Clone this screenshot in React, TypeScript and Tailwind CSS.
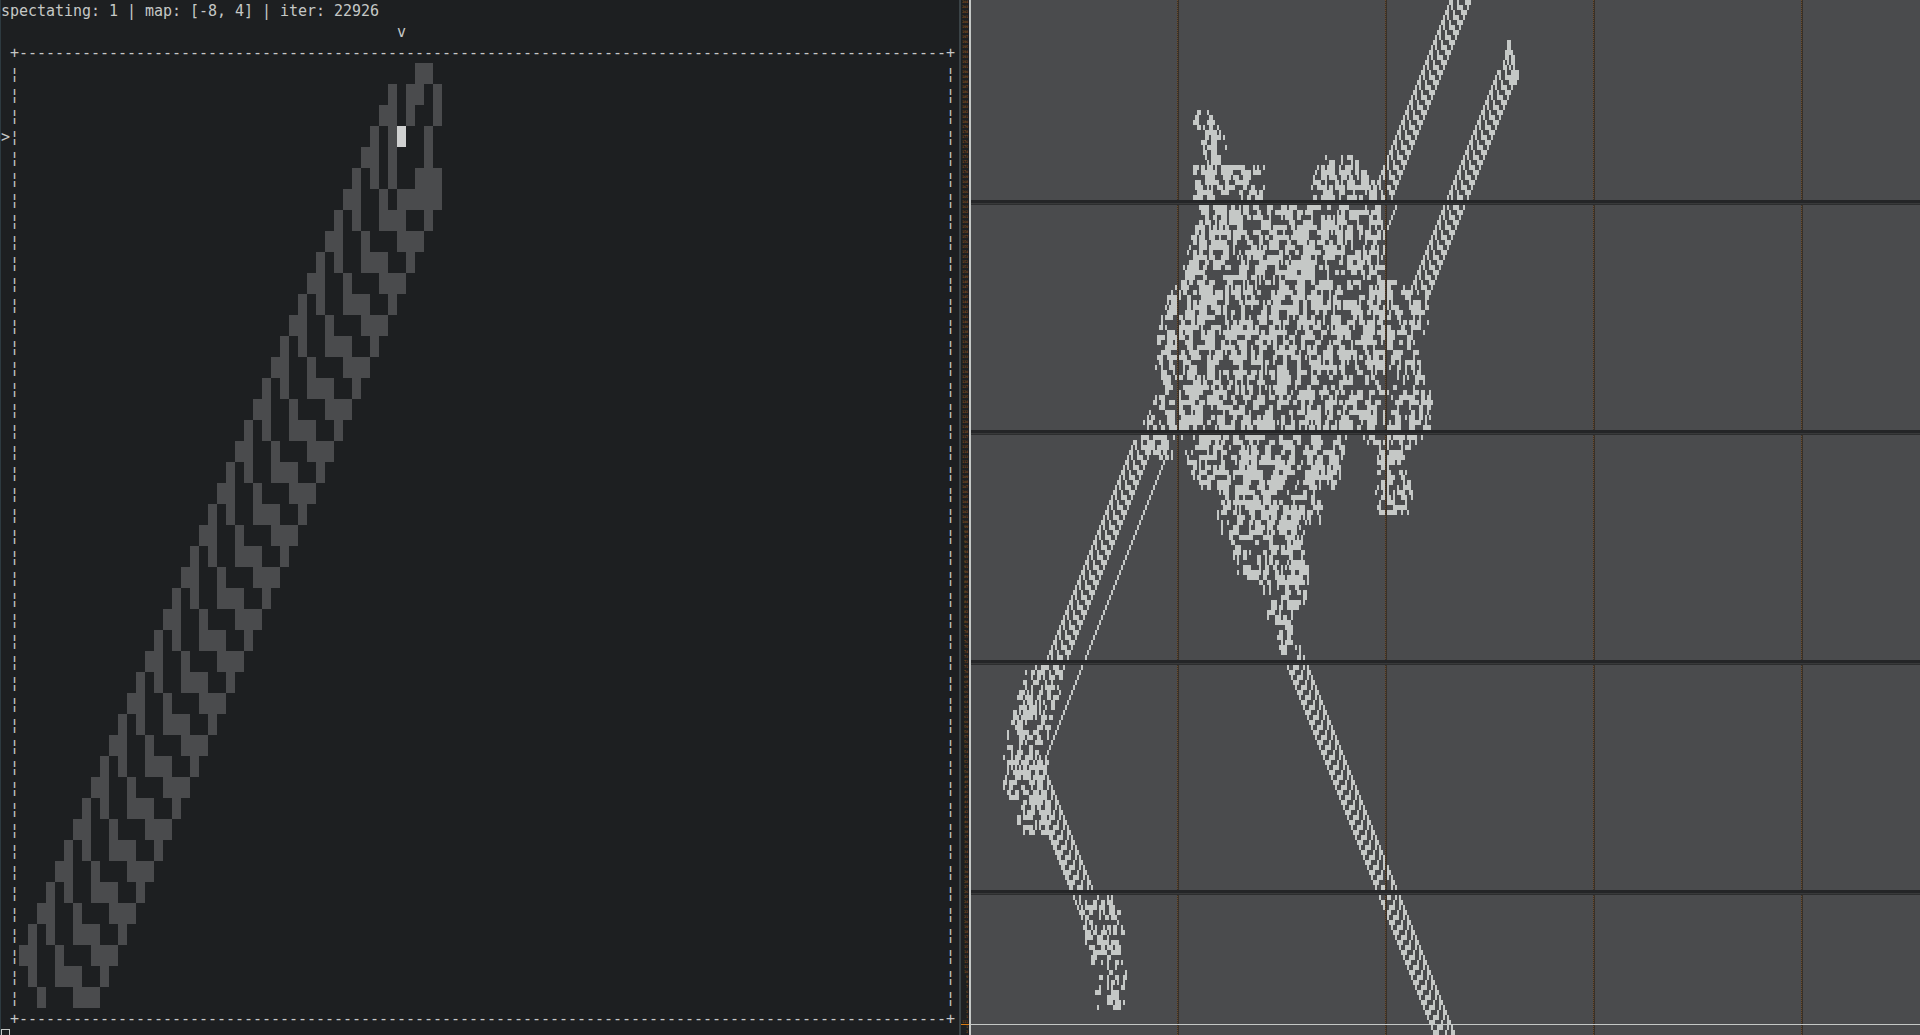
const BG = '#1d1f21'
const DEAD = '#4a4b4d'
const LIVE = '#c5c8c6'

// ---- left pane ----

const LEFT_HEAD: number[][] = [
    [46, 47],
    [43, 45, 46, 48],
    [42, 43, 45, 48],
    [41, 43, 47],
    [40, 41, 43, 47],
    [39, 41, 43, 46, 47, 48],
    [38, 39, 42, 44, 45, 46, 47, 48],
]

// the glider repeats every two rows, one column further left each row
function downLeft(r: number, base: number) {
    const even = r % 2 === 0
    const b = even ? base - r : base - (r - 1)
    return even
        ? [b, b + 1, b + 4, b + 8, b + 9, b + 10]
        : [b - 1, b + 1, b + 4, b + 5, b + 6, b + 9]
}

function downRight(r: number, base: number) {
    const even = r % 2 === 0
    const t = even ? r + base : r - 1 + base
    return even
        ? [t, t - 1, t - 4, t - 8, t - 9, t - 10]
        : [t + 1, t - 1, t - 4, t - 5, t - 6, t - 9]
}

function leftRow(r: number) {
    if (r < LEFT_HEAD.length) return LEFT_HEAD[r]
    if (r === 43) return [3, 6, 7, 8, 11]
    if (r === 44) return [4, 8, 9, 10]
    return downLeft(r, 44)
}

function cellsPath(rows: number[][], w: number, h: number, x0 = 0, y0 = 0) {
    let d = ''
    rows.forEach((cols, r) => {
        const sorted = [...new Set(cols)].sort((a, b) => a - b)
        let i = 0
        while (i < sorted.length) {
            let j = i
            while (j + 1 < sorted.length && sorted[j + 1] === sorted[j] + 1) j++
            const run = (sorted[j] - sorted[i] + 1) * w
            d += `M${x0 + sorted[i] * w} ${y0 + r * h}h${run}v${h}h${-run}z`
            i = j + 1
        }
    })
    return d
}

const leftCells = cellsPath(Array.from({ length: 45 }, (_, r) => leftRow(r)), 9, 21)

function boardLine(r: number) {
    const head = r === 3 ? '>' : ' '
    return head + '¦' + ' '.repeat(103) + '¦'
}

function LeftPane() {
    return (
        <div className="relative w-[958px] shrink-0 overflow-hidden whitespace-pre pt-[1px] text-[15px] leading-[21px] tracking-[-0.03px] text-[#c5c8c6]">
            <div>spectating: 1 | map: [-8, 4] | iter: 22926</div>
            <div>{' '.repeat(44) + 'v'}</div>
            <div>{' +' + '-'.repeat(103) + '+'}</div>
            {Array.from({ length: 45 }, (_, r) => (
                <div key={r}>{boardLine(r)}</div>
            ))}
            <div>{' +' + '-'.repeat(103) + '+'}</div>
            <div className="-mt-[1px] h-[9px] w-[9px] border border-[#c5c8c6]" />
            <svg className="absolute left-0 top-[63px]" width="958" height="945" shapeRendering="crispEdges">
                <path d={leftCells} fill={DEAD} />
                <rect x="396" y="63" width="9" height="21" fill="#cfd0d0" />
            </svg>
        </div>
    )
}

// ---- right pane ----

const ROWS = 207
const COLS = 475
const LINE_COLS = [103, 207, 311, 415]
const BAND_ROWS = [40, 86, 132, 178]

type Key = [number, number, number]

const BLOBS: Key[][] = [
    [[110, 1197, 1210], [120, 1193, 1215], [135, 1198, 1227], [165, 1207, 1228]],
    [[165, 1193, 1265], [200, 1193, 1265]],
    [[155, 1325, 1353], [165, 1315, 1365], [180, 1310, 1375], [200, 1310, 1386]],
    [
        [205, 1193, 1386], [240, 1190, 1386], [250, 1187, 1386], [270, 1180, 1386],
        [285, 1175, 1405], [295, 1167, 1428], [320, 1160, 1428], [345, 1155, 1420],
        [370, 1155, 1420], [380, 1160, 1430], [400, 1153, 1432], [420, 1143, 1433],
        [430, 1141, 1433],
    ],
    [
        [435, 1180, 1347], [445, 1183, 1345], [460, 1187, 1343], [475, 1190, 1340],
        [485, 1200, 1335], [490, 1217, 1325], [520, 1218, 1320], [525, 1219, 1305],
        [545, 1228, 1306], [555, 1231, 1310], [575, 1240, 1308], [585, 1263, 1308],
        [600, 1263, 1305], [610, 1265, 1300], [620, 1268, 1290], [630, 1273, 1295],
        [650, 1277, 1302], [660, 1285, 1308],
    ],
    [[435, 1140, 1175], [445, 1140, 1175], [455, 1145, 1172]],
    [[435, 1363, 1423], [445, 1370, 1412], [460, 1372, 1405], [480, 1380, 1410], [490, 1375, 1413], [510, 1378, 1412]],
    [
        [665, 1035, 1060], [675, 1016, 1062], [690, 1013, 1060], [710, 1013, 1055],
        [730, 1007, 1050], [745, 1003, 1047], [790, 1003, 1050], [810, 1010, 1050],
        [830, 1017, 1050],
    ],
    [[888, 1078, 1117], [930, 1084, 1124], [965, 1090, 1127], [1005, 1096, 1124]],
]

function buildMap() {
    let seed = 22926
    const rnd = () => {
        seed = (seed * 1664525 + 1013904223) >>> 0
        return (seed >>> 8) / 16777216
    }
    const noise: number[][] = Array.from({ length: ROWS + 2 }, () =>
        Array.from({ length: COLS + 2 }, () => (rnd() < 0.53 ? 1 : 0)),
    )
    const grid: boolean[][] = Array.from({ length: ROWS }, () => Array(COLS).fill(false))

    // soup, clumped a little so it doesn't look like plain static
    BLOBS.forEach((blob, index) => {
        const sparse = index >= 7 ? 0.2 : 0
        for (let k = 0; k < blob.length; k++) {
            const a = blob[k]
            const b = blob[k + 1] ?? a
            for (let r = Math.ceil(a[0] / 5); r * 5 < b[0] || (k === blob.length - 1 && r * 5 <= a[0]); r++) {
                const f = b[0] === a[0] ? 0 : (r * 5 - a[0]) / (b[0] - a[0])
                const c0 = Math.round((a[1] + (b[1] - a[1]) * f - 971) / 2)
                const c1 = Math.round((a[2] + (b[2] - a[2]) * f - 971) / 2)
                for (let c = c0; c < c1; c++) {
                    const n = noise[r + 1]
                    const sum = n[c + 1] * 2 + n[c] + n[c + 2] + noise[r][c + 1]
                    // edges of a blob are more broken up than its middle
                    const edge = c - c0 < 3 || c1 - c <= 3 ? 0.3 : 0
                    if (sum >= 3 && rnd() >= sparse + edge) grid[r][c] = true
                }
            }
        }
    })

    const put = (r: number, cols: number[]) => {
        for (const c of cols) if (c >= 0 && c < COLS) grid[r][c] = true
    }

    // stripe running up and to the right
    for (let r = 0; r <= 39; r++) put(r, downLeft(r, 239))
    for (let r = 41; r <= 47; r++) put(r, [253 - r])

    // second stripe, with its head
    const head: number[][] = [
        [268, 269],
        [268, 269],
        [267, 268, 269, 270],
        [267, 268, 270, 271],
        [266, 268, 270, 271],
        [266, 267, 269, 271],
        [270, 271, 272],
        [269, 270, 271, 272, 273],
        [270, 271, 272],
    ]
    head.forEach((cols, i) => put(8 + i, cols))
    for (let r = 14; r <= 58; r++) put(r, downLeft(r, 277))

    // stripes around the lower-left blob
    for (let r = 88; r <= 135; r++) put(r, downLeft(r, 169))
    for (let r = 92; r <= 151; r++) put(r, [188 - r])
    for (let r = 150; r <= 178; r++) put(r, downRight(r, -117))
    for (let r = 160; r <= 183; r++) put(r, [r - 128])

    // long stripe down to the bottom edge
    for (let r = 133; r < ROWS; r++) put(r, downRight(r, 35))

    for (const r of BAND_ROWS) grid[r].fill(false)
    for (const row of grid) for (const c of LINE_COLS) row[c] = false

    return grid.map((row) => row.flatMap((on, c) => (on ? [c] : [])))
}

const rightCells = cellsPath(buildMap(), 2, 5)

function RightPane() {
    return (
        <div className="relative min-w-0 flex-1 overflow-hidden bg-[#4a4b4d]">
            <svg className="block" width="949" height="1035" shapeRendering="crispEdges">
                <path d={rightCells} fill={LIVE} />
                {LINE_COLS.map((c) => (
                    <g key={c}>
                        <rect x={c * 2} y="0" width="2" height="1035" fill="#38312a" />
                        <line x1={c * 2 + 0.5} y1="0" x2={c * 2 + 0.5} y2="1035" stroke="#6b4d2e" strokeDasharray="1 1" />
                    </g>
                ))}
                {BAND_ROWS.map((r) => (
                    <g key={r}>
                        <rect x="0" y={r * 5} width="949" height="3" fill="#242527" />
                        <rect x="0" y={r * 5 + 3} width="949" height="1" fill="#38393a" />
                        <rect x="0" y={r * 5 + 4} width="949" height="1" fill="#2c2d2e" />
                    </g>
                ))}
                <rect x="0" y="1024" width="949" height="1" fill="#c5c8c6" />
            </svg>
        </div>
    )
}

function lineNumber(row: number) {
    if (row === 204) return 111
    return Math.abs(204 - row)
}

function LineNumbers() {
    return (
        <div className="relative w-[8px] shrink-0 overflow-hidden text-right text-[3.3px] leading-[5px] tracking-normal text-[#a8601c]">
            {Array.from({ length: ROWS }, (_, r) => (
                <div key={r} className="h-[5px] pr-[1px]">
                    {lineNumber(r)}
                </div>
            ))}
            <div className="absolute inset-x-0 top-[1024px] h-[1px] bg-[#d97b12]" />
        </div>
    )
}

export default function App() {
    return (
        <div className="flex h-[1035px] w-[1920px] overflow-hidden bg-[#1d1f21] font-['DejaVu_Sans_Mono',monospace]" style={{ background: BG }}>
            <div className="w-[1px] shrink-0 bg-[#2d3a40]" />
            <LeftPane />
            <div className="w-[2px] shrink-0 bg-[#3a4347]" />
            <LineNumbers />
            <div className="w-[2px] shrink-0 bg-[#c5c8c6]" />
            <RightPane />
        </div>
    )
}
